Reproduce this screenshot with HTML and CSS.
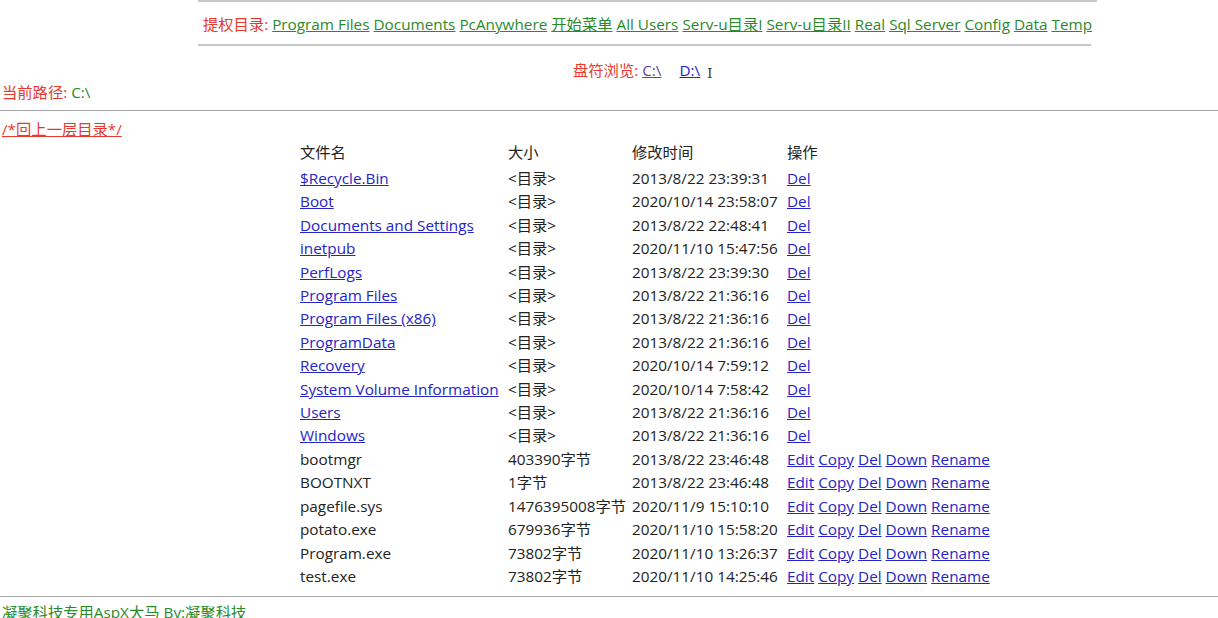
FILE: index.html
```html
<!DOCTYPE html>
<html>
<head>
<meta charset="utf-8">
<link rel="stylesheet" href="styles.css">
</head>
<body>
<div class="top">
  <hr class="rule">
  <div class="paths"><span class="red">提权目录:</span> <a class="g" href="#">Program Files</a> <a class="g" href="#">Documents</a> <a class="g" href="#">PcAnywhere</a> <a class="g" href="#">开始菜单</a> <a class="g" href="#">All Users</a> <a class="g" href="#">Serv-u目录I</a> <a class="g" href="#">Serv-u目录II</a> <a class="g" href="#">Real</a> <a class="g" href="#">Sql Server</a> <a class="g" href="#">Config</a> <a class="g" href="#">Data</a> <a class="g" href="#">Temp</a></div>
  <hr class="rule rule2">
</div>
<div class="drives"><span class="red">盘符浏览:</span> <a class="visited" href="#">C:\</a><span class="sp"></span><a class="b" href="#">D:\</a><span class="cursor">I</span></div>
<div class="cur"><span class="red">当前路径:</span> <span class="green">C:\</span></div>
<hr class="full">
<div class="up"><a class="r" href="#">/*回上一层目录*/</a></div>
<table class="files">
  <tr class="head"><td class="c1">文件名</td><td class="c2">大小</td><td class="c3">修改时间</td><td>操作</td></tr>
  <tr><td><a href="#">$Recycle.Bin</a></td><td>&lt;目录&gt;</td><td>2013/8/22 23:39:31</td><td><a href="#">Del</a></td></tr>
  <tr><td><a href="#">Boot</a></td><td>&lt;目录&gt;</td><td>2020/10/14 23:58:07</td><td><a href="#">Del</a></td></tr>
  <tr><td><a href="#">Documents and Settings</a></td><td>&lt;目录&gt;</td><td>2013/8/22 22:48:41</td><td><a href="#">Del</a></td></tr>
  <tr><td><a href="#">inetpub</a></td><td>&lt;目录&gt;</td><td>2020/11/10 15:47:56</td><td><a href="#">Del</a></td></tr>
  <tr><td><a href="#">PerfLogs</a></td><td>&lt;目录&gt;</td><td>2013/8/22 23:39:30</td><td><a href="#">Del</a></td></tr>
  <tr><td><a href="#">Program Files</a></td><td>&lt;目录&gt;</td><td>2013/8/22 21:36:16</td><td><a href="#">Del</a></td></tr>
  <tr><td><a href="#">Program Files (x86)</a></td><td>&lt;目录&gt;</td><td>2013/8/22 21:36:16</td><td><a href="#">Del</a></td></tr>
  <tr><td><a href="#">ProgramData</a></td><td>&lt;目录&gt;</td><td>2013/8/22 21:36:16</td><td><a href="#">Del</a></td></tr>
  <tr><td><a href="#">Recovery</a></td><td>&lt;目录&gt;</td><td>2020/10/14 7:59:12</td><td><a href="#">Del</a></td></tr>
  <tr><td><a href="#">System Volume Information</a></td><td>&lt;目录&gt;</td><td>2020/10/14 7:58:42</td><td><a href="#">Del</a></td></tr>
  <tr><td><a href="#">Users</a></td><td>&lt;目录&gt;</td><td>2013/8/22 21:36:16</td><td><a href="#">Del</a></td></tr>
  <tr><td><a href="#">Windows</a></td><td>&lt;目录&gt;</td><td>2013/8/22 21:36:16</td><td><a href="#">Del</a></td></tr>
  <tr><td>bootmgr</td><td>403390字节</td><td>2013/8/22 23:46:48</td><td><a href="#">Edit</a> <a href="#">Copy</a> <a href="#">Del</a> <a href="#">Down</a> <a href="#">Rename</a></td></tr>
  <tr><td>BOOTNXT</td><td>1字节</td><td>2013/8/22 23:46:48</td><td><a href="#">Edit</a> <a href="#">Copy</a> <a href="#">Del</a> <a href="#">Down</a> <a href="#">Rename</a></td></tr>
  <tr><td>pagefile.sys</td><td>1476395008字节</td><td>2020/11/9 15:10:10</td><td><a href="#">Edit</a> <a href="#">Copy</a> <a href="#">Del</a> <a href="#">Down</a> <a href="#">Rename</a></td></tr>
  <tr><td>potato.exe</td><td>679936字节</td><td>2020/11/10 15:58:20</td><td><a href="#">Edit</a> <a href="#">Copy</a> <a href="#">Del</a> <a href="#">Down</a> <a href="#">Rename</a></td></tr>
  <tr><td>Program.exe</td><td>73802字节</td><td>2020/11/10 13:26:37</td><td><a href="#">Edit</a> <a href="#">Copy</a> <a href="#">Del</a> <a href="#">Down</a> <a href="#">Rename</a></td></tr>
  <tr><td>test.exe</td><td>73802字节</td><td>2020/11/10 14:25:46</td><td><a href="#">Edit</a> <a href="#">Copy</a> <a href="#">Del</a> <a href="#">Down</a> <a href="#">Rename</a></td></tr>
</table>
<hr class="full bottom">
<div class="foot">凝聚科技专用AspX大马 By:凝聚科技</div>
</body>
</html>
```
FILE: styles.css
```css
html, body {
  margin: 0;
  padding: 0;
  background: #ffffff;
}
body {
  font-family: "Open Sans", "Noto Sans CJK SC", sans-serif;
  font-size: 15.3px;
  line-height: 21px;
  color: #222222;
  overflow: hidden;
}
a { color: #2424c8; }
.red { color: #e8392c; }
.green { color: #2a8a2a; }
.top {
  width: 899px;
  margin-left: 198px;
}
.rule {
  border: 0;
  border-top: 2px solid #c8c8c8;
  margin: 0;
  height: 0;
}
.rule2 { width: 893px; }
.paths {
  text-align: center;
  padding: 12px 0 9px;
  white-space: nowrap;
}
a.g { color: #2a8a2a; }
.drives {
  margin-left: 573px;
  padding-top: 14px;
  white-space: nowrap;
}
.drives .visited { color: #5c44a8; }
.sp { display: inline-block; width: 18px; }
.drives .b { color: #2424c8; }
.cursor {
  display: inline-block;
  margin-left: 7px;
  font-family: "DejaVu Serif", serif;
  font-size: 13px;
  color: #333;
  vertical-align: -2px;
}
.cur {
  padding-left: 2px;
  margin-top: -2px;
}
.full {
  border: 0;
  border-top: 1px solid #a8a8a8;
  margin: 7px 0 0;
  height: 0;
}
.up {
  padding-left: 2px;
  margin-top: 8px;
}
a.r { color: #e8392c; }
.files {
  margin-left: 298px;
  margin-top: 1px;
  border-collapse: separate;
  border-spacing: 2px 0;
}
.files td {
  padding: 0;
  white-space: nowrap;
  line-height: 23.4px;
  vertical-align: middle;
}
.files .head td { line-height: 23px; padding-bottom: 3px; }
.files .c1 { width: 206px; }
.files .c2 { width: 122px; }
.files .c3 { width: 153px; }
.bottom { margin-top: 8px; }
.foot {
  color: #2a8a2a;
  padding-left: 2px;
  margin-top: 5px;
}
```
